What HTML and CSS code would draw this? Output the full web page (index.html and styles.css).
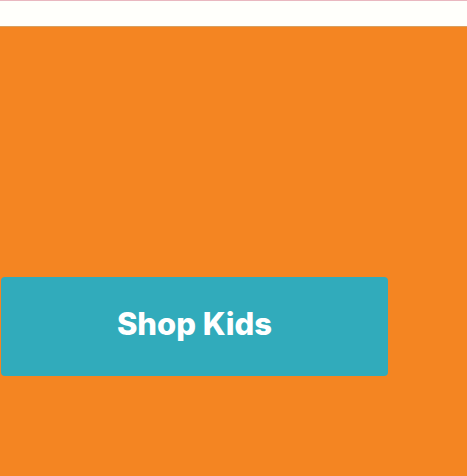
FILE: index.html
```html
<!DOCTYPE html>
<html>
<head>
<meta charset="utf-8">
<link rel="stylesheet" href="styles.css">
</head>
<body>
<div class="topbar"></div>
<main class="hero">
  <a class="btn" href="#">Shop Kids</a>
</main>
</body>
</html>
```
FILE: styles.css
```css
html, body {
  margin: 0;
  padding: 0;
  height: 100%;
}
body {
  background: #f48522;
  display: flex;
  flex-direction: column;
  font-family: Inter, "Noto Sans", sans-serif;
}
.topbar {
  background: #fffffb;
  border-top: 1px solid #e9b8c0;
  border-bottom: 1px solid #d8a060;
  box-sizing: border-box;
  height: 27px;
}
.hero {
  flex: 1;
  background: #f48522;
  padding: 250px 79px 0 1px;
}
.btn {
  display: flex;
  align-items: center;
  justify-content: center;
  box-sizing: border-box;
  height: 99px;
  padding-bottom: 6px;
  background: #31abbb;
  border-radius: 4px;
  color: #fff;
  text-decoration: none;
  font-weight: 800;
  font-size: 31px;
  letter-spacing: 0;
}
```
